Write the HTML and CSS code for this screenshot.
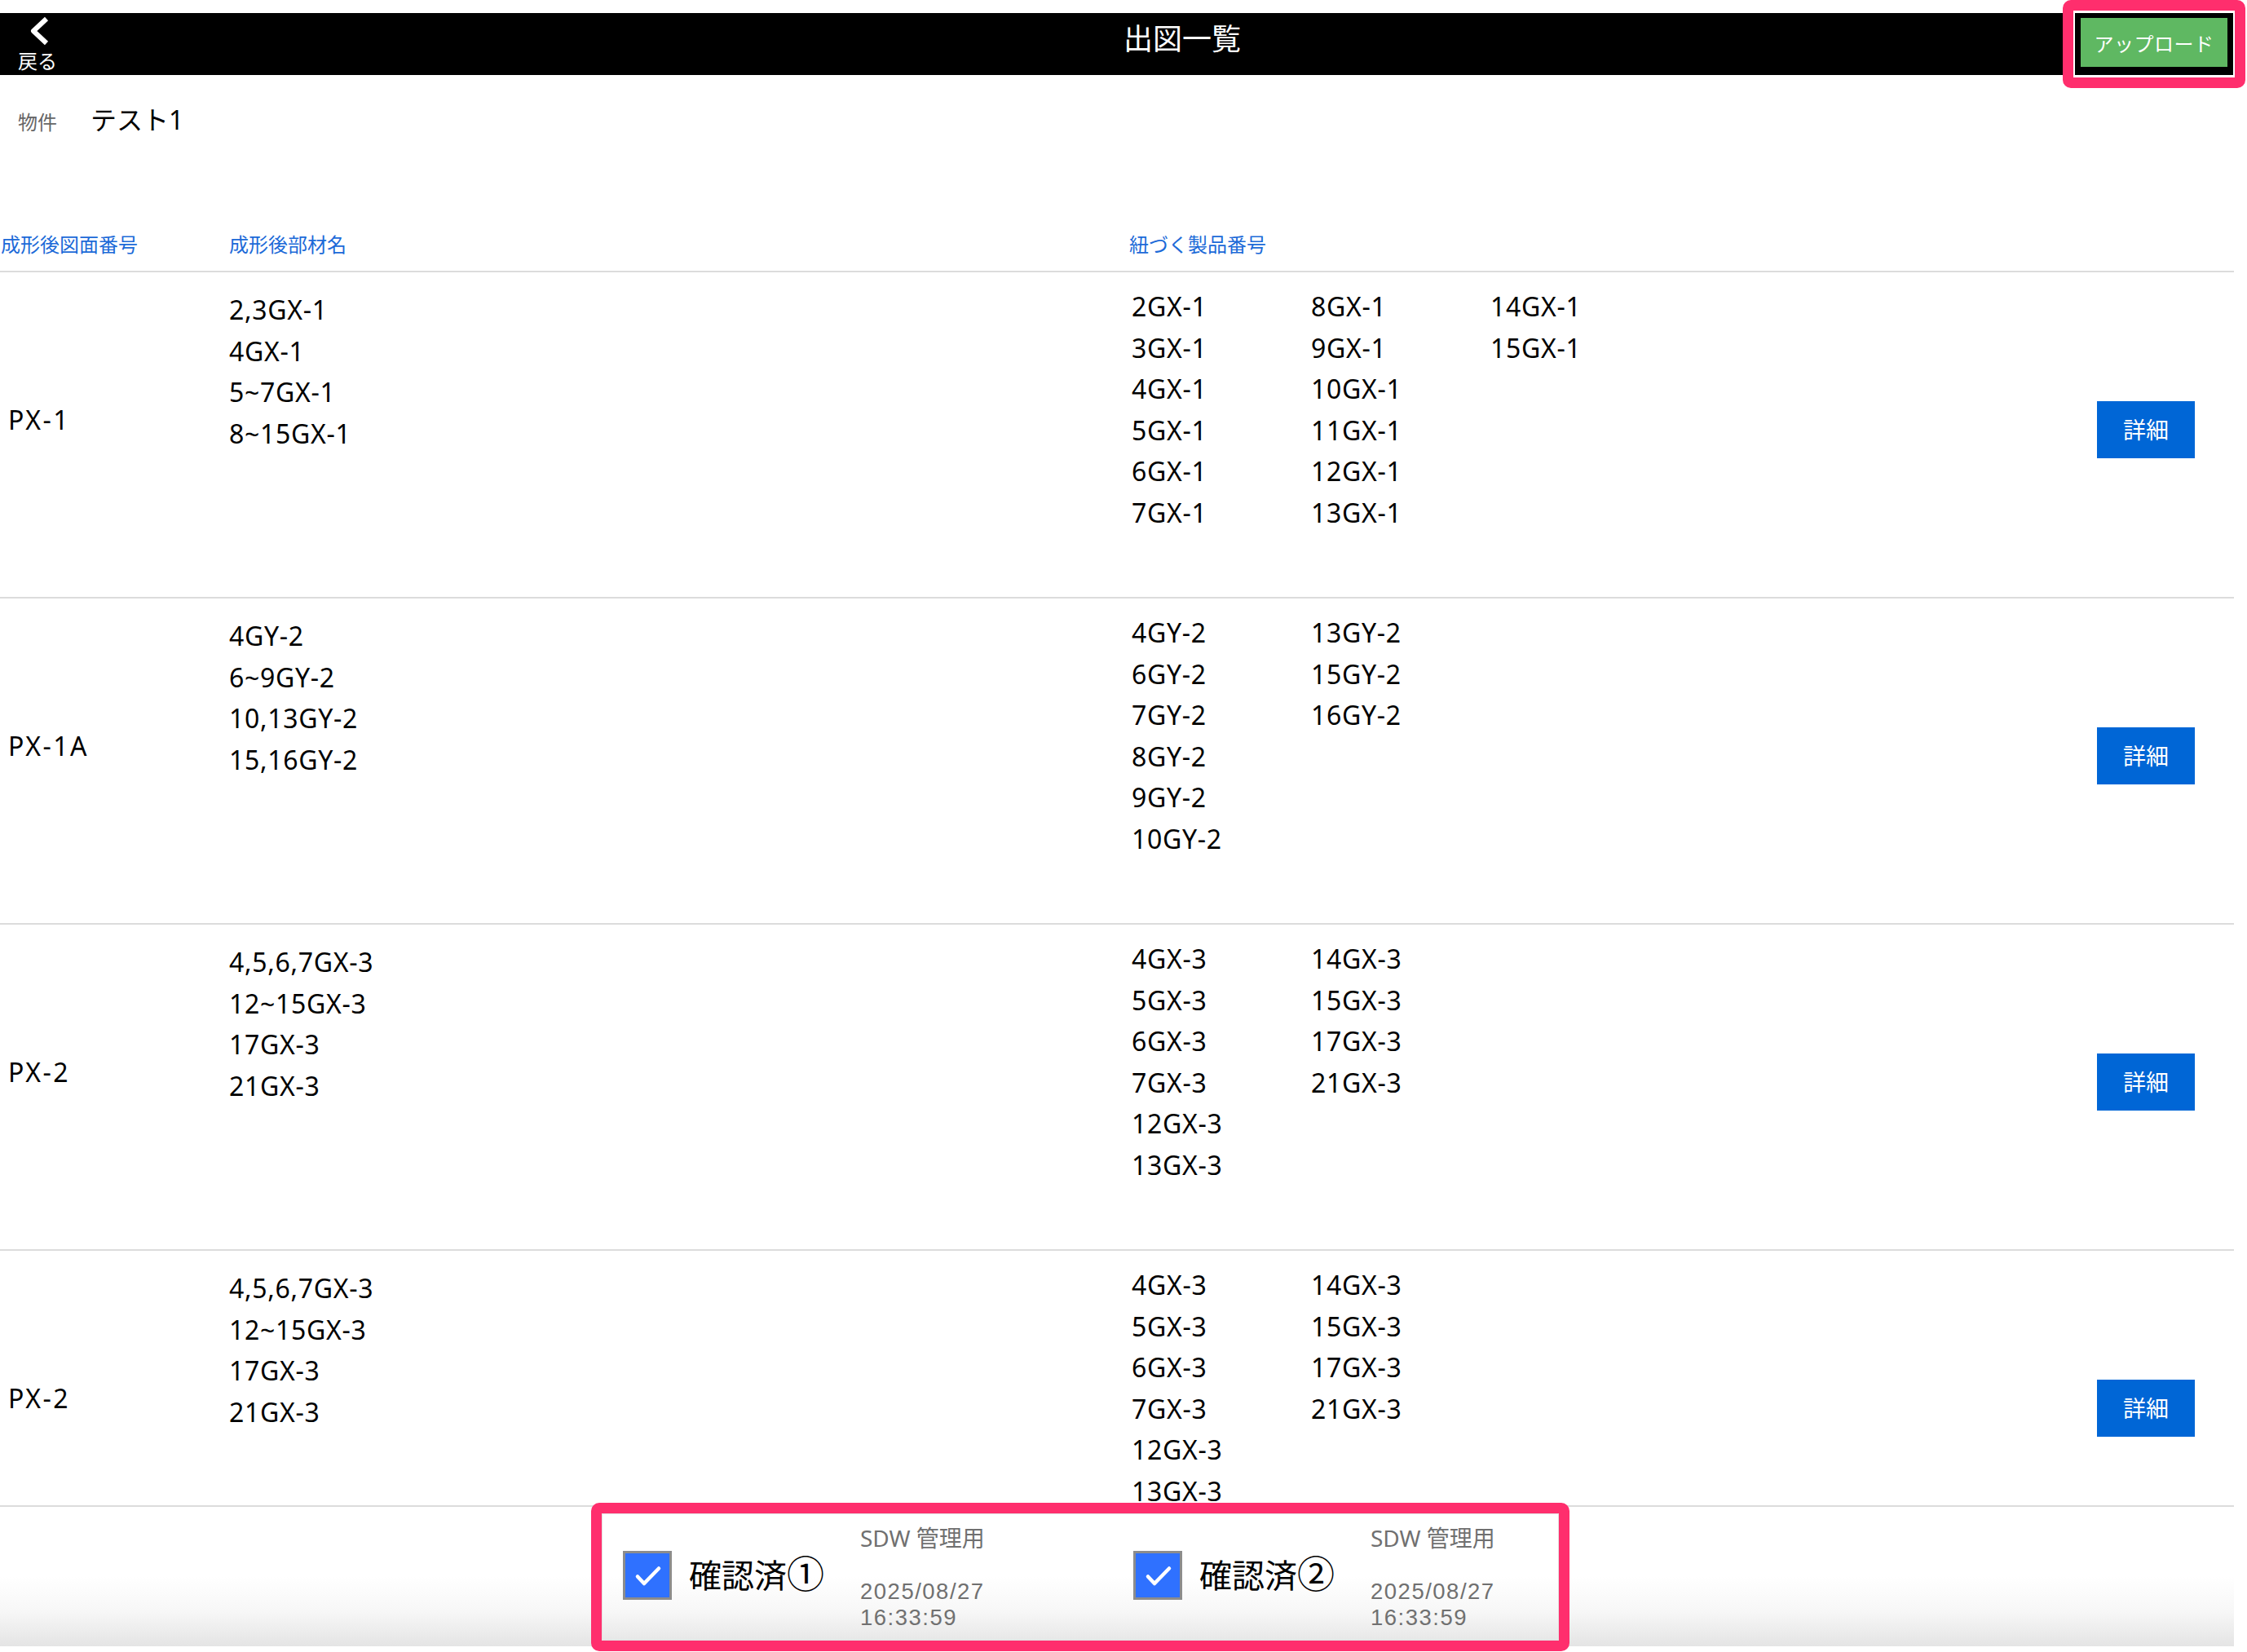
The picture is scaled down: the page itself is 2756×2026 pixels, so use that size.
FILE: index.html
```html
<!DOCTYPE html>
<html lang="ja">
<head>
<meta charset="utf-8">
<title>出図一覧</title>
<link rel="stylesheet" href="styles.css">
</head>
<body>
<div class="page">
  <header class="topbar">
    <a class="back">
      <svg class="back-icon" width="32" height="36" viewBox="0 0 32 36"><path d="M25 3 L9 18 L25 33" fill="none" stroke="#fff" stroke-width="6" stroke-linejoin="round"/></svg>
      <span class="back-label">戻る</span>
    </a>
    <h1 class="title">出図一覧</h1>
    <button class="upload">アップロード</button>
  </header>

  <div class="property">
    <span class="property-label">物件</span>
    <span class="property-name">テスト1</span>
  </div>

  <div class="table">
    <div class="thead">
      <div class="th th-drawing">成形後図面番号</div>
      <div class="th">成形後部材名</div>
      <div class="th">紐づく製品番号</div>
    </div>

    <div class="row">
      <div class="cell-drawing">PX-1</div>
      <div class="cell-part">
        <div>2,3GX-1</div><div>4GX-1</div><div>5~7GX-1</div><div>8~15GX-1</div>
      </div>
      <div class="products">
        <div>2GX-1</div><div>3GX-1</div><div>4GX-1</div><div>5GX-1</div><div>6GX-1</div><div>7GX-1</div>
        <div>8GX-1</div><div>9GX-1</div><div>10GX-1</div><div>11GX-1</div><div>12GX-1</div><div>13GX-1</div>
        <div>14GX-1</div><div>15GX-1</div>
      </div>
      <button class="detail">詳細</button>
    </div>

    <div class="row">
      <div class="cell-drawing">PX-1A</div>
      <div class="cell-part">
        <div>4GY-2</div><div>6~9GY-2</div><div>10,13GY-2</div><div>15,16GY-2</div>
      </div>
      <div class="products">
        <div>4GY-2</div><div>6GY-2</div><div>7GY-2</div><div>8GY-2</div><div>9GY-2</div><div>10GY-2</div>
        <div>13GY-2</div><div>15GY-2</div><div>16GY-2</div>
      </div>
      <button class="detail">詳細</button>
    </div>

    <div class="row">
      <div class="cell-drawing">PX-2</div>
      <div class="cell-part">
        <div>4,5,6,7GX-3</div><div>12~15GX-3</div><div>17GX-3</div><div>21GX-3</div>
      </div>
      <div class="products">
        <div>4GX-3</div><div>5GX-3</div><div>6GX-3</div><div>7GX-3</div><div>12GX-3</div><div>13GX-3</div>
        <div>14GX-3</div><div>15GX-3</div><div>17GX-3</div><div>21GX-3</div>
      </div>
      <button class="detail">詳細</button>
    </div>

    <div class="row">
      <div class="cell-drawing">PX-2</div>
      <div class="cell-part">
        <div>4,5,6,7GX-3</div><div>12~15GX-3</div><div>17GX-3</div><div>21GX-3</div>
      </div>
      <div class="products">
        <div>4GX-3</div><div>5GX-3</div><div>6GX-3</div><div>7GX-3</div><div>12GX-3</div><div>13GX-3</div>
        <div>14GX-3</div><div>15GX-3</div><div>17GX-3</div><div>21GX-3</div>
      </div>
      <button class="detail">詳細</button>
    </div>
  </div>
</div>

<footer class="footer">
  <div class="confirm">
    <span class="check"><svg width="54" height="54" viewBox="0 0 54 54"><path d="M15 28.5 L23 37 L41 18.5" fill="none" stroke="#fff" stroke-width="4.5" stroke-linecap="round" stroke-linejoin="round"/></svg></span>
    <span class="confirm-label">確認済<span class="circled">①</span></span>
    <div class="meta">
      <div class="meta-owner">SDW 管理用</div>
      <div class="meta-date">2025/08/27<br>16:33:59</div>
    </div>
  </div>
  <div class="confirm">
    <span class="check"><svg width="54" height="54" viewBox="0 0 54 54"><path d="M15 28.5 L23 37 L41 18.5" fill="none" stroke="#fff" stroke-width="4.5" stroke-linecap="round" stroke-linejoin="round"/></svg></span>
    <span class="confirm-label">確認済<span class="circled">②</span></span>
    <div class="meta">
      <div class="meta-owner">SDW 管理用</div>
      <div class="meta-date">2025/08/27<br>16:33:59</div>
    </div>
  </div>
</footer>

<div class="mark mark-upload"></div>
<div class="mark mark-confirm"></div>
</body>
</html>
```

FILE: styles.css
```css
html, body {
  margin: 0;
  padding: 0;
  height: 2026px;
  overflow: hidden;
  background: #fff;
}

body {
  font-family: "Noto Sans", "Noto Sans CJK JP", sans-serif;
  color: #000;
}

.page {
  width: 2740px;
  padding-top: 16px;
}

/* top bar */
.topbar {
  height: 76px;
  background: #000;
  display: flex;
  align-items: flex-start;
}

.back {
  width: 120px;
  flex: none;
  box-sizing: border-box;
  padding-left: 22px;
  display: flex;
  flex-direction: column;
  align-items: flex-start;
  color: #fff;
}

.back-icon {
  display: block;
  margin-top: 4px;
  margin-left: 10px;
}

.back-label {
  font-size: 24px;
  line-height: 26px;
  margin-top: 6px;
}

.title {
  flex: 1;
  margin: 0;
  padding-top: 10px;
  padding-left: 228px;
  text-align: center;
  font-size: 36px;
  line-height: 44px;
  font-weight: normal;
  color: #fff;
}

.upload {
  flex: none;
  width: 180px;
  height: 60px;
  margin-top: 6px;
  margin-right: 8px;
  padding: 0;
  border: 0;
  background: #5fb862;
  color: #fff;
  font-family: inherit;
  font-size: 24px;
  letter-spacing: 0.5px;
}

/* property */
.property {
  display: flex;
  align-items: baseline;
  height: 40px;
  margin-top: 35px;
}

.property-label {
  padding-left: 22px;
  margin-right: 41px;
  font-size: 24px;
  line-height: 34px;
  color: #666;
}

.property-name {
  font-size: 32px;
  line-height: 40px;
  color: #000;
}

/* table */
.table {
  margin-top: 118px;
}

.thead {
  display: grid;
  grid-template-columns: 281px 1104px 1fr;
  padding-bottom: 17px;
  border-bottom: 2px solid #dcdcdc;
}

.th {
  font-size: 24px;
  line-height: 30px;
  color: #1c6ad8;
}

.th-drawing {
  padding-left: 1px;
}

.row {
  display: grid;
  grid-template-columns: 281px 1104px 1fr auto;
  height: 398px;
  border-bottom: 2px solid #dcdcdc;
  font-size: 32px;
  line-height: 50.6px;
  letter-spacing: 0.7px;
  color: #000;
}

.cell-drawing {
  padding-top: 156px;
  padding-left: 10px;
  letter-spacing: 2.5px;
}

.cell-part {
  padding-top: 21px;
}

.products {
  padding-top: 17px;
  padding-left: 3px;
  display: grid;
  grid-auto-flow: column;
  grid-template-rows: repeat(6, 50.6px);
  grid-auto-columns: 220px;
  align-content: start;
}

.detail {
  align-self: start;
  margin-top: 158px;
  margin-right: 48px;
  width: 120px;
  height: 70px;
  padding: 0 0 3px;
  border: 0;
  background: #0066d6;
  color: #fff;
  font-family: inherit;
  font-size: 28px;
  letter-spacing: 0;
}

/* bottom bar */
.footer {
  position: fixed;
  left: 0;
  bottom: 7px;
  width: 1976px;
  height: 171px;
  box-sizing: content-box;
  padding-left: 764px;
  border-top: 2px solid #dcdcdc;
  background: linear-gradient(to bottom, #ffffff 0%, #ffffff 50%, #f7f7f7 75%, #e4e4e4 100%);
  display: flex;
  align-items: flex-start;
}

.confirm {
  display: flex;
  align-items: flex-start;
  width: 626px;
  flex: none;
}

.check {
  display: block;
  width: 54px;
  height: 54px;
  margin-top: 54px;
  margin-right: 21px;
  border: 3px solid #8c8c8c;
  background: #2f71ff;
}

.check svg {
  display: block;
}

.confirm-label {
  width: 210px;
  margin-top: 54px;
  font-size: 40px;
  line-height: 60px;
  color: #000;
  white-space: nowrap;
}

.circled {
  font-size: 46px;
  line-height: 1;
}

.meta {
  padding-top: 22px;
  color: #707070;
}

.meta-owner {
  font-size: 28px;
  line-height: 32px;
}

.meta-date {
  margin-top: 34px;
  font-family: "Liberation Sans", "Noto Sans CJK JP", sans-serif;
  font-size: 27.5px;
  line-height: 32px;
  letter-spacing: 1.5px;
}

/* annotation frames */
.mark {
  position: absolute;
  box-sizing: border-box;
  border: 13px solid #ff2e6d;
  border-radius: 10px;
  pointer-events: none;
}

.mark-upload {
  left: 2530px;
  top: 0;
  width: 224px;
  height: 108px;
  box-shadow: inset 0 0 0 2px #fff;
}

.mark-confirm {
  left: 725px;
  top: 1843px;
  width: 1200px;
  height: 182px;
  box-shadow: inset 0 0 0 1px #e2e2e2;
}
```
